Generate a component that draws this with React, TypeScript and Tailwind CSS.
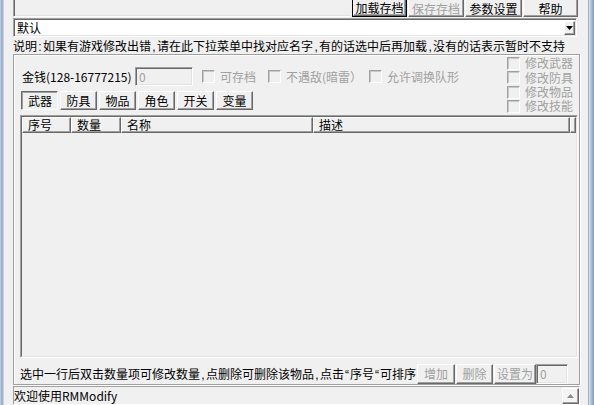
import React from 'react';

// classic 3D edges
const raised =
  'border border-t-white border-l-white border-r-[#696969] border-b-[#696969] shadow-[inset_-1px_-1px_0_#a0a0a0]';
const pressed =
  'border border-t-[#696969] border-l-[#696969] border-r-white border-b-white shadow-[inset_1px_1px_0_#a0a0a0]';
const sunken =
  'border border-t-[#a0a0a0] border-l-[#a0a0a0] border-r-white border-b-white shadow-[inset_1px_1px_0_#696969,inset_-1px_-1px_0_#e3e3e3]';

// half width punctuation, 6px like the bitmap font
function H({ c }: { c: string }) {
  return <span className="inline-block w-[6px] text-center font-['Liberation_Sans',sans-serif]">{c}</span>;
}

function Btn({
  children,
  w,
  disabled,
  down,
  className = '',
}: {
  children: React.ReactNode;
  w: string;
  disabled?: boolean;
  down?: boolean;
  className?: string;
}) {
  return (
    <div
      className={`${w} h-full flex items-center justify-center whitespace-nowrap ${down ? pressed + ' pt-[1px] pl-[1px]' : raised} ${
        disabled ? 'text-[#a0a0a0]' : 'text-black'
      } ${className}`}
    >
      {children}
    </div>
  );
}

function Check({ label, className = '' }: { label: string; className?: string }) {
  return (
    <div className={`flex items-center shrink-0 ${className}`}>
      <span className="w-[13px] h-[13px] shrink-0 bg-[#f0f0f0] border border-t-[#a0a0a0] border-l-[#a0a0a0] border-r-white border-b-white shadow-[inset_1px_1px_0_#c8c8c8]" />
      <span className="ml-[5px] text-[#a0a0a0] whitespace-nowrap">{label}</span>
    </div>
  );
}

const columns = [
  { name: '序号', w: 'w-[49px]' },
  { name: '数量', w: 'w-[50px]' },
  { name: '名称', w: 'w-[192px]' },
  { name: '描述', w: 'w-[257px]' },
];

const tabs = ['武器', '防具', '物品', '角色', '开关', '变量'];

export default function App() {
  return (
    <div className="w-[594px] h-[405px] overflow-hidden flex bg-[#f0f0f0] text-[12px] leading-[14px] text-black font-['Noto_Sans_CJK_SC',sans-serif]">
      {/* window frame left */}
      <div className="w-[4px] shrink-0 bg-linear-to-r from-[#c8d6e8] via-[#8fa4c0] to-[#d8e1ec]" />
      <div className="w-[9px] shrink-0" />

      <div className="w-[567px] shrink-0 flex flex-col">
        {/* top strip */}
        <div className="h-[17px] flex">
          <div className="flex-1 border-l border-b border-l-[#a0a0a0] border-b-white shadow-[inset_1px_0_0_#696969,inset_0_-1px_0_#e3e3e3]" />
          <div className="flex gap-[1px] ml-[1px] mr-[2px]">
            <div className="w-[55px] h-full border border-t-0 border-black">
              <Btn w="w-full" className="border-t-0 pt-[1px]">加载存档</Btn>
            </div>
            <Btn w="w-[56px]" disabled className="border-t-0 pt-[1px]">保存存档</Btn>
            <Btn w="w-[57px]" className="border-t-0 pt-[1px]">参数设置</Btn>
            <Btn w="w-[55px]" className="border-t-0 pt-[1px]">帮助</Btn>
          </div>
        </div>

        {/* combobox */}
        <div className={`mt-[1px] mr-[3px] h-[20px] bg-white flex items-center ${sunken}`}>
          <span className="pl-[3px]">默认</span>
          <div className={`ml-auto mr-[1px] w-[11px] h-[14px] bg-[#f0f0f0] flex items-center justify-center ${raised}`}>
            <svg width="7" height="4" viewBox="0 0 7 4">
              <path d="M0 0h7L3.5 4z" fill="#000" />
            </svg>
          </div>
        </div>

        <div className="h-[17px] pt-[2px] whitespace-nowrap">
          说明<H c=":" />如果有游戏修改出错<H c="," />请在此下拉菜单中找对应名字<H c="," />有的话选中后再加载
          <H c="," />没有的话表示暂时不支持
        </div>

        {/* group box */}
        <div className="h-[336px] border border-[#a0a0a0] shadow-[inset_1px_1px_0_#fff,1px_1px_0_#fff] flex flex-col">
          <div className="h-[60px] flex">
            <div className="flex-1 pt-[12px] flex flex-col">
              <div className="h-[19px] ml-[8px] flex items-center">
                <span className="w-[113px] shrink-0 whitespace-nowrap">金钱(128-16777215)</span>
                <div className={`w-[58px] h-[19px] shrink-0 bg-[#f0f0f0] text-[#a0a0a0] pl-[3px] pt-[2px] ${sunken}`}>0</div>
                <Check className="ml-[9px] w-[66px]" label="可存档" />
                <Check className="w-[101px]" label="不遇敌(暗雷）" />
                <Check label="允许调换队形" />
              </div>
              <div className="mt-[5px] h-[19px] ml-[7px] flex gap-[2px]">
                {tabs.map((t, i) => (
                  <Btn key={t} w="w-[37px]" down={i === 0}>
                    {t}
                  </Btn>
                ))}
              </div>
            </div>
            <div className="w-[72px] shrink-0 pt-[1px] flex flex-col">
              <Check className="h-[14px]" label="修改武器" />
              <Check className="h-[15px]" label="修改防具" />
              <Check className="h-[14px]" label="修改物品" />
              <Check className="h-[14px]" label="修改技能" />
            </div>
          </div>

          {/* list view */}
          <div className="ml-[6px] mr-[1px] h-[243px] border border-t-[#a0a0a0] border-l-[#a0a0a0] border-r-white border-b-white">
            <div className="h-full border border-t-[#696969] border-l-[#696969] border-r-[#e3e3e3] border-b-[#e3e3e3] bg-[#f0f0f0] flex flex-col">
              <div className="h-[16px] flex">
                {columns.map((c) => (
                  <div key={c.name} className={`${c.w} h-full shrink-0 pl-[5px] flex items-center ${raised}`}>
                    {c.name}
                  </div>
                ))}
                <div className={`flex-1 h-full ${raised}`} />
              </div>
            </div>
          </div>

          <div className="mt-[6px] h-[20px] flex items-center">
            <span className="ml-[6px] whitespace-nowrap">
              选中一行后双击数量项可修改数量<H c="," />点删除可删除该物品<H c="," />点击<H c="“" />序号<H c="“" />可排序
            </span>
            <div className="ml-auto mr-[11px] h-full flex">
              <Btn w="w-[38px]" disabled>增加</Btn>
              <Btn w="w-[37px]" disabled className="ml-[1px]">删除</Btn>
              <Btn w="w-[42px]" disabled className="ml-[1px]">设置为</Btn>
              <div className={`w-[32px] h-full bg-[#f0f0f0] text-[#a0a0a0] pl-[3px] pt-[2px] ${sunken}`}>0</div>
            </div>
          </div>
        </div>

        {/* status edit */}
        <div className="mt-[1px] flex-1 flex border border-t-[#a0a0a0] border-l-[#a0a0a0] border-r-white border-b-white">
          <div className="flex-1 pt-[2px] whitespace-nowrap">欢迎使用RMModify</div>
          <div className="w-[17px] bg-[#f4f4f4] pt-[1px]">
            <div className={`h-[16px] flex justify-center pt-[5px] ${raised}`}>
              <svg width="7" height="4" viewBox="0 0 7 4">
                <path d="M3.5 0L7 4H0z" fill="#8a8a8a" />
              </svg>
            </div>
          </div>
        </div>
      </div>

      <div className="w-[8px] shrink-0" />
      {/* window frame right */}
      <div className="w-[6px] shrink-0 border-l border-l-[#a8b0bc] bg-linear-to-r from-[#d9e3ef] via-[#a9bcd6] to-[#8298b6]" />
    </div>
  );
}
